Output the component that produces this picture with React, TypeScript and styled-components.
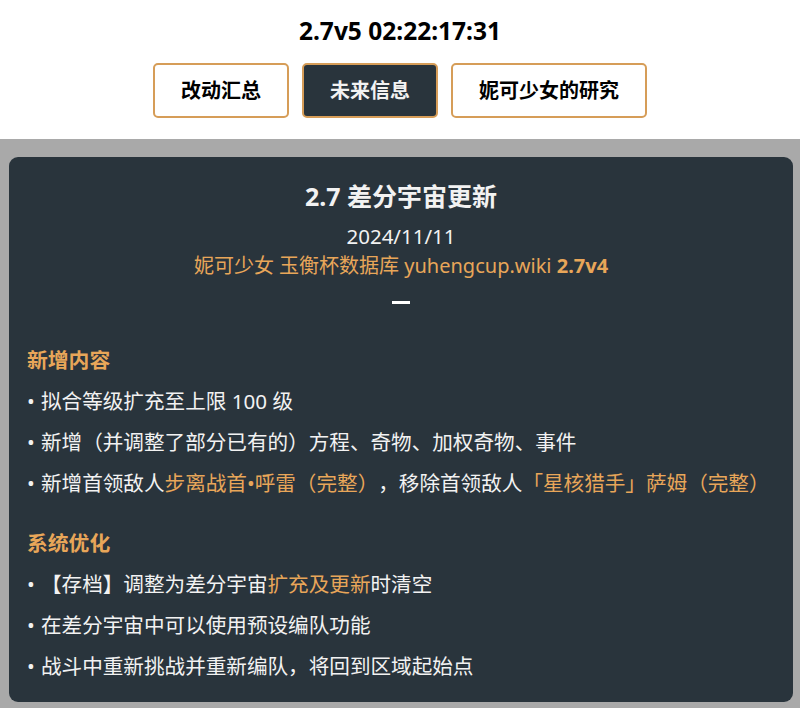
import styled, { createGlobalStyle } from 'styled-components';

const ORANGE = '#e8a659';
const CARD_BG = '#29343c';

const GlobalStyle = createGlobalStyle`
  html, body {
    margin: 0;
    padding: 0;
    background: #a9a9a9;
  }
  body {
    font-family: 'Noto Sans', 'Noto Sans CJK SC', sans-serif;
  }
  * {
    box-sizing: border-box;
  }
`;

const Page = styled.div`
  display: flex;
  flex-direction: column;
  min-height: 708px;
`;

const Header = styled.header`
  display: flex;
  flex-direction: column;
  align-items: center;
  gap: 17px;
  background: #fff;
  padding: 16px 0 21px;
`;

const Countdown = styled.div`
  font-size: 24.5px;
  line-height: 30px;
  font-weight: 700;
  color: #000;
`;

const Tabs = styled.nav`
  display: flex;
  gap: 13px;
`;

const TabButton = styled.button<{ $active?: boolean }>`
  font-family: inherit;
  font-size: 20px;
  line-height: 29px;
  font-weight: 700;
  padding: 11px 26px;
  border: 2px solid #d69d58;
  border-radius: 5px;
  background: ${(p) => (p.$active ? CARD_BG : '#fff')};
  color: ${(p) => (p.$active ? '#f2f2f2' : '#000')};
  cursor: pointer;
`;

const Main = styled.main`
  flex: 1;
  padding: 18px 7px 0 9px;
`;

const Card = styled.section`
  background: ${CARD_BG};
  border-radius: 9px;
  padding: 24px 18px 21px;
  color: #f2f2f2;
`;

const CardHead = styled.div`
  display: flex;
  flex-direction: column;
  align-items: center;
`;

const Title = styled.h2`
  margin: 0;
  font-size: 25px;
  line-height: 31px;
  font-weight: 700;
`;

const DateLine = styled.div`
  margin-top: 9px;
  font-size: 20.5px;
  line-height: 30px;
`;

const Source = styled.div`
  font-size: 20px;
  line-height: 30px;
  color: ${ORANGE};

  b {
    font-weight: 700;
  }
`;

const Divider = styled.div`
  width: 18px;
  height: 3px;
  margin-top: 20px;
  background: #fff;
`;

const Section = styled.div<{ $first?: boolean }>`
  margin-top: ${(p) => (p.$first ? '41px' : '30px')};
`;

const SectionTitle = styled.h3`
  margin: 0;
  font-size: 20.8px;
  line-height: 30px;
  font-weight: 700;
  color: ${ORANGE};
`;

const List = styled.ul`
  list-style: none;
  margin: 0;
  padding: 0;
`;

const Item = styled.li`
  margin-top: 11px;
  font-size: 20.6px;
  line-height: 30px;
  white-space: nowrap;
  text-spacing-trim: space-all;

  &::before {
    content: '•';
    display: inline-block;
    width: 14px;
  }
`;

const Hl = styled.span`
  color: ${ORANGE};
`;

const tabs = ['改动汇总', '未来信息', '妮可少女的研究'];

export default function App() {
  return (
    <>
      <GlobalStyle />
      <Page>
        <Header>
          <Countdown>2.7v5 02:22:17:31</Countdown>
          <Tabs>
            {tabs.map((t) => (
              <TabButton key={t} $active={t === '未来信息'}>
                {t}
              </TabButton>
            ))}
          </Tabs>
        </Header>
        <Main>
          <Card>
            <CardHead>
              <Title>2.7 差分宇宙更新</Title>
              <DateLine>2024/11/11</DateLine>
              <Source>
                妮可少女 玉衡杯数据库 yuhengcup.wiki <b>2.7v4</b>
              </Source>
              <Divider />
            </CardHead>

            <Section $first>
              <SectionTitle>新增内容</SectionTitle>
              <List>
                <Item>拟合等级扩充至上限 100 级</Item>
                <Item>新增（并调整了部分已有的）方程、奇物、加权奇物、事件</Item>
                <Item>
                  新增首领敌人<Hl>步离战首•呼雷（完整）</Hl>，移除首领敌人
                  <Hl>「星核猎手」萨姆（完整）</Hl>
                </Item>
              </List>
            </Section>

            <Section>
              <SectionTitle>系统优化</SectionTitle>
              <List>
                <Item>
                  【存档】调整为差分宇宙<Hl>扩充及更新</Hl>时清空
                </Item>
                <Item>在差分宇宙中可以使用预设编队功能</Item>
                <Item>战斗中重新挑战并重新编队，将回到区域起始点</Item>
              </List>
            </Section>
          </Card>
        </Main>
      </Page>
    </>
  );
}
